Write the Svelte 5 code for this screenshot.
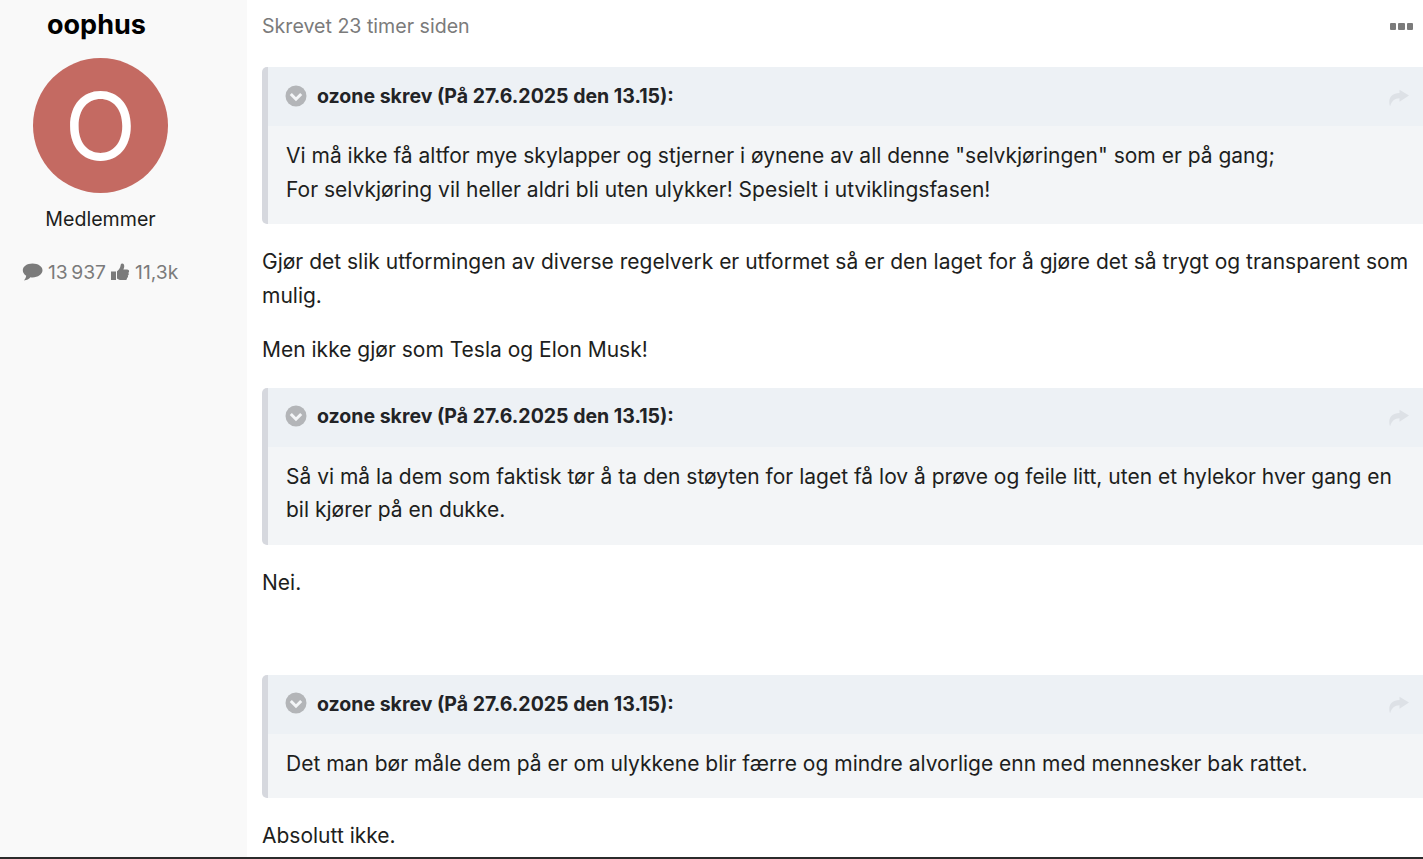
<script>
  const quoteHead = "ozone skrev (På 27.6.2025 den 13.15):";
</script>

{#snippet quote(lines)}
  <blockquote>
    <div class="quote-head">
      <svg class="toggle" width="22" height="22" viewBox="0 0 22 22" aria-hidden="true">
        <circle cx="11" cy="11" r="10.5" fill="#b3b5b8" />
        <path d="m5.800 9 5.200 5.200L16.200 9" fill="none" stroke="#f3f5f7" stroke-width="3" />
      </svg>
      <span>{quoteHead}</span>
      <svg class="share" width="21" height="18" viewBox="-1 -1.5 21 18" aria-hidden="true">
        <path d="M20 6 10.500.3v3.200C4 3.500.3 7 .3 12.500c0 1.700.2 3 .8 4.500C2.300 12 5.500 8.800 10.500 8.800v3.500z" fill="#dde1e6" />
      </svg>
    </div>
    <div class="quote-body">
      {#each lines as line}
        <div>{line}</div>
      {/each}
    </div>
  </blockquote>
{/snippet}

<div class="page">
  <aside>
    <h3>oophus</h3>
    <div class="avatar">O</div>
    <div class="group">Medlemmer</div>
    <div class="stats">
      <svg width="21" height="18" viewBox="0 0 21 18" aria-hidden="true">
        <path d="M10.500.5C5 .5.800 3.400.800 7.300c0 2.300 1.300 4.200 3.400 5.400-.2 1.700-1 3.200-2.200 4.800 2.800-.4 5-1.500 6.400-3.300.7.100 1.500.2 2.100.2 5.500 0 10-3.100 10-7.100S16 .5 10.500.5z" fill="#7b7b7b" />
      </svg>
      <span>13&#8239;937</span>
      <svg width="20" height="18" viewBox="0 0 20 18" aria-hidden="true">
        <path d="M1 8.500h5V17H1zM7 8.200c1.700-1.200 3.100-3 3.500-5.200.2-1.300.4-2.500 1.600-2.500 1.700 0 2.400 1.700 2.100 3.500-.1.900-.5 1.700-.8 2.500h3.800c1.100 0 1.900.8 1.900 1.800 0 .7-.4 1.200-.8 1.600.3.300.5.700.5 1.200 0 .7-.4 1.200-1 1.500.1.200.2.500.2.800 0 .7-.5 1.200-1.100 1.500.1.200.1.400.1.600 0 1-.9 1.500-2 1.500H11c-1.800 0-2.900-.7-4-1.500z" fill="#7b7b7b" />
      </svg>
      <span>11,3k</span>
    </div>
  </aside>

  <main>
    <div class="post-head">
      <span class="time">Skrevet 23 timer siden</span>
      <span class="dots"><i></i><i></i><i></i></span>
    </div>

    {@render quote([
      'Vi må ikke få altfor mye skylapper og stjerner i øynene av all denne "selvkjøringen" som er på gang;',
      "For selvkjøring vil heller aldri bli uten ulykker! Spesielt i utviklingsfasen!",
    ])}
    <p>Gjør det slik utformingen av diverse regelverk er utformet så er den laget for å gjøre det så trygt og transparent som mulig.</p>
    <p>Men ikke gjør som Tesla og Elon Musk!</p>

    {@render quote([
      "Så vi må la dem som faktisk tør å ta den støyten for laget få lov å prøve og feile litt, uten et hylekor hver gang en bil kjører på en dukke.",
    ])}
    <p>Nei.</p>
    <p>&nbsp;</p>

    {@render quote([
      "Det man bør måle dem på er om ulykkene blir færre og mindre alvorlige enn med mennesker bak rattet.",
    ])}
    <p>Absolutt ikke.</p>
  </main>
</div>

<style>
  :global(body) {
    margin: 0;
    overflow: hidden;
    background: #fff;
  }
  .page {
    display: grid;
    grid-template-columns: 247px minmax(0, 1fr);
    height: 857px;
    overflow: hidden;
    border-bottom: 2px solid #2b2b2b;
    font-family: Inter, "Liberation Sans", sans-serif;
    color: #1d1e20;
  }
  aside {
    display: flex;
    flex-direction: column;
    background: #f9f9f9;
  }
  h3 {
    margin: 9px 0 0 47px;
    font-size: 27px;
    line-height: 32px;
    font-weight: 700;
    color: #000;
  }
  .avatar {
    display: grid;
    place-items: center;
    width: 135px;
    height: 135px;
    margin: 17px 0 0 33px;
    border-radius: 50%;
    background: #c46a62;
    color: #fff;
    font-size: 94px;
    font-weight: 400;
    line-height: 1;
  }
  .group {
    width: 201px;
    margin-top: 14px;
    font-size: 19.6px;
    line-height: 24px;
    text-align: center;
  }
  .stats {
    display: flex;
    align-items: center;
    gap: 4px;
    margin: 29px 0 0 22px;
    font-size: 19.3px;
    line-height: 24px;
    color: #7b7b7b;
    white-space: nowrap;
  }
  .stats span {
    margin-left: 1px;
  }
  main {
    min-width: 0;
    padding-left: 15px;
    font-size: 21px;
    line-height: 33.6px;
  }
  .post-head {
    display: flex;
    align-items: center;
    justify-content: space-between;
    height: 53px;
    margin-bottom: -7px;
    padding-right: 10px;
  }
  .time {
    font-size: 19.6px;
    color: #7b7b7b;
  }
  .dots {
    display: flex;
    gap: 2px;
  }
  .dots i {
    width: 6.5px;
    height: 6.5px;
    border-radius: 1px;
    background: #7b7b7b;
  }
  blockquote {
    margin: 21px 0;
    border-left: 6px solid #d6d8de;
    border-radius: 5px 0 0 5px;
    background: #f3f5f7;
  }
  .quote-head {
    display: flex;
    align-items: center;
    gap: 10px;
    height: 59px;
    padding: 0 14px 0 17px;
    background: #edf1f5;
    font-size: 19.5px;
    font-weight: 700;
    color: #222326;
  }
  .toggle {
    margin-top: -2px;
  }
  .share {
    margin-left: auto;
  }
  .quote-body {
    padding: 13px 18px 17.800px;
  }
  p {
    margin: 21px 0;
  }
</style>
